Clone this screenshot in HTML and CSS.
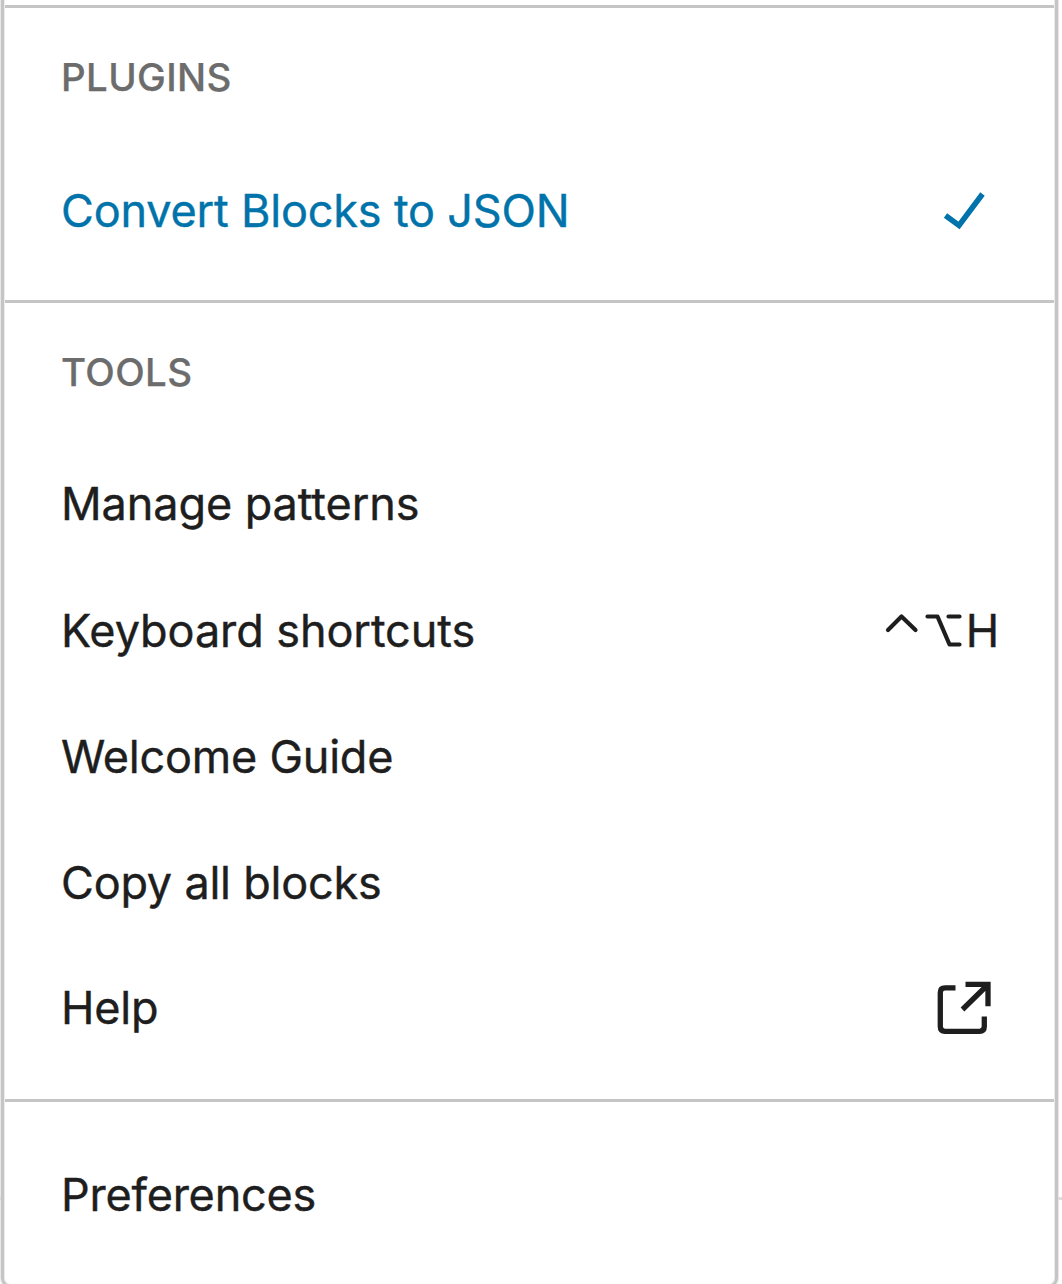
FILE: index.html
```html
<!DOCTYPE html>
<html lang="en">
<head>
<meta charset="utf-8">
<title>Options</title>
<link rel="stylesheet" href="styles.css">
</head>
<body>
<i class="edge edge-left"></i><i class="edge edge-right"></i>
<main class="menu">
  <section class="group plugins">
    <h2 class="heading">PLUGINS</h2>
    <div class="item active"><span>Convert Blocks to JSON</span>
      <svg class="check" width="44" height="40" viewBox="0 0 44 40"><path d="M3.500 24.500 17 34.500 40.500 3" fill="none" stroke="currentColor" stroke-width="5.500"/></svg>
    </div>
  </section>
  <section class="group tools">
    <h2 class="heading">TOOLS</h2>
    <div class="item manage"><span>Manage patterns</span></div>
    <div class="item keyboard"><span>Keyboard shortcuts</span>
      <span class="keys"><svg width="80" height="36" viewBox="0 0 80 36" fill="none" stroke="currentColor" stroke-width="4.200" stroke-linecap="round" stroke-linejoin="round"><path d="M3 17 16.500 3.500 30.500 17M42.500 3.500H52.500L64.500 31.500H74.500M63.500 3.500H74.500"/></svg><span>H</span></span>
    </div>
    <div class="item"><span>Welcome Guide</span></div>
    <div class="item"><span>Copy all blocks</span></div>
    <div class="item help"><span>Help</span>
      <svg class="external" width="56" height="56" viewBox="0 0 56 56" fill="none" stroke="currentColor" stroke-width="5.300"><path d="M19.500 7.800H9Q4.300 7.800 4.300 12.500V46.500Q4.300 51.300 9 51.300H43.500Q48.300 51.300 48.300 46.500V36.500M29.500 4.300H52V26.200M51 5.500 26.500 29.500"/></svg>
    </div>
  </section>
  <section class="group preferences">
    <div class="item"><span>Preferences</span></div>
  </section>
</main>
</body>
</html>
```
FILE: styles.css
```css
* { box-sizing: border-box; }
body { position: relative; margin: 0; padding: 0 4px 0 1px; height: 1284px; overflow: hidden; background: #fff; color: #1e1e1e; font-family: Inter, sans-serif; }
.menu { height: 1290px; margin-top: -2px; padding: 7px 1px 0; background: #fff; border: 3px solid #c5c5c5; border-top: 0; border-radius: 0 0 10px 10px; box-shadow: inset 0 0 0 1px #ececec, 0 0 0 1px #e8e8e8; }
.edge { position: absolute; top: 1197px; height: 3px; background: #ddd; z-index: 1; }
.edge-left { left: 0; width: 1px; }
.edge-right { left: 1058px; width: 4px; }
.group { border-top: 3px solid #c5c5c5; padding: 0 57px; }
.plugins { height: 295px; }
.tools { height: 799px; }
.heading { margin: 0; height: 138px; line-height: 138px; font-size: 38.5px; font-weight: 500; letter-spacing: 0.35px; color: #6c6c6c; -webkit-text-stroke: 0.25px; }
.item { height: 126px; display: flex; align-items: center; justify-content: space-between; font-size: 45px; font-weight: 400; letter-spacing: -0.22px; line-height: 60px; white-space: nowrap; -webkit-text-stroke: 0.4px; }
.item > span:first-child, .heading { margin-left: -1px; }
.active { color: #0073aa; margin-top: 2px; letter-spacing: -0.18px; }
.manage { margin-bottom: 1px; letter-spacing: -0.08px; }
.keyboard { letter-spacing: -0.08px; }
.help { margin-top: -1px; }
.preferences .item { height: 185px; }
.check { margin-right: 11px; }
.external { margin-right: 5px; }
.keys { display: flex; align-items: center; gap: 1px; margin-right: -2px; }
```
